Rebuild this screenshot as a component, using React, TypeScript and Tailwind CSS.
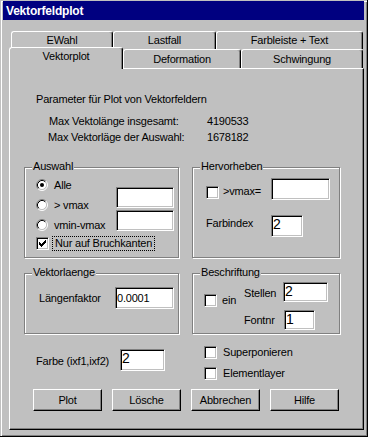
import React from 'react';

const sunken =
  'bg-white border border-t-[#808080] border-l-[#808080] border-r-white border-b-white shadow-[inset_1px_1px_0_#000,inset_-1px_-1px_0_#c0c0c0]';
const raised =
  'border border-t-white border-l-white border-r-black border-b-black shadow-[inset_-1px_-1px_0_#808080]';

function Field({ className, value, big }: { className: string; value?: string; big?: boolean }) {
  return (
    <div
      className={`${sunken} ${className} flex shrink-0 pl-[1px] ${
        big ? 'items-start text-[14px] leading-[16px] tracking-normal' : 'items-center'
      }`}
    >
      {value}
    </div>
  );
}

function CheckBox({ checked }: { checked?: boolean }) {
  return (
    <div className={`${sunken} w-[13px] h-[13px] shrink-0`}>
      {checked && (
        <svg width="9" height="9" viewBox="0 0 9 9" className="block ml-[1px] mt-[1px]" shapeRendering="crispEdges">
          <path
            d="M1 3h1v3h-1zM2 4h1v3h-1zM3 5h1v3h-1zM4 4h1v3h-1zM5 3h1v3h-1zM6 2h1v3h-1zM7 1h1v3h-1z"
            fill="#000"
          />
        </svg>
      )}
    </div>
  );
}

function Radio({ checked }: { checked?: boolean }) {
  return (
    <svg width="12" height="12" viewBox="0 0 12 12" className="shrink-0">
      <circle cx="6" cy="6" r="4.5" fill="#fff" />
      <path d="M2.11 9.89A5.5 5.5 0 0 1 9.89 2.11" fill="none" stroke="#808080" />
      <path d="M9.89 2.11A5.5 5.5 0 0 1 2.11 9.89" fill="none" stroke="#fff" />
      <path d="M2.82 9.18A4.5 4.5 0 0 1 9.18 2.82" fill="none" stroke="#000" />
      <path d="M9.18 2.82A4.5 4.5 0 0 1 2.82 9.18" fill="none" stroke="#c0c0c0" />
      {checked && <circle cx="6" cy="6" r="2" fill="#000" />}
    </svg>
  );
}

function Group({ title, className, children }: { title: string; className: string; children: React.ReactNode }) {
  return (
    <div className={`relative border border-[#808080] shadow-[inset_1px_1px_0_#fff,1px_1px_0_#fff] ${className}`}>
      <span className="absolute -top-[8px] left-[7px] px-[1px] bg-[#c0c0c0]">{title}</span>
      {children}
    </div>
  );
}

const tabBase =
  'flex justify-center bg-[#c0c0c0] border-t border-l border-r border-t-white border-l-white border-r-black rounded-t-[3px] shadow-[inset_-1px_0_0_#808080]';

export default function App() {
  return (
    <div className="w-[368px] h-[437px] flex flex-col pt-[1px] px-[3px] bg-[#c0c0c0] border-r border-b border-black shadow-[inset_1px_1px_0_#c0c0c0,inset_2px_2px_0_#fff,inset_-1px_-1px_0_#808080] font-['Liberation_Sans',Arial,sans-serif] text-[11px] leading-[13px] tracking-[-0.2px] text-black">
      <div className="h-[19px] shrink-0 flex items-center pl-[3px] bg-[#000080] text-white text-[12px] leading-[14px] font-bold">
        Vektorfeldplot
      </div>

      <div className="mt-[11px] ml-[6px] w-[355px]">
        <div className="flex h-[18px] pl-[2px]">
          <div className={`${tabBase} w-[102px] h-[18px] pt-[2px]`}>EWahl</div>
          <div className={`${tabBase} w-[103px] h-[18px] pt-[2px]`}>Lastfall</div>
          <div className={`${tabBase} w-[147px] h-[18px] pt-[2px]`}>Farbleiste + Text</div>
        </div>
        <div className="flex items-start h-[19px]">
          <div className={`${tabBase} relative z-10 w-[114px] h-[22px] -mt-[2px] pt-[2px]`}>Vektorplot</div>
          <div className={`${tabBase} w-[118px] h-[19px] pt-[3px]`}>Deformation</div>
          <div className={`${tabBase} w-[122px] h-[19px] pt-[3px]`}>Schwingung</div>
        </div>

        <div className={`${raised} w-[355px] h-[362px] flex flex-col`}>
          <p className="ml-[26px] mt-[24px]">Parameter für Plot von Vektorfeldern</p>
          <div className="flex mt-[9px]">
            <span className="ml-[39px] w-[158px]">Max Vektolänge insgesamt:</span>
            <span>4190533</span>
          </div>
          <div className="flex mt-[3px]">
            <span className="ml-[38px] w-[159px]">Max Vektorläge der Auswahl:</span>
            <span>1678182</span>
          </div>

          <div className="flex gap-[13px] ml-[14px] mt-[23px]">
            <Group title="Auswahl" className="w-[155px] h-[91px]">
              <div className="pt-[7px] pl-[11px]">
                <div className="flex">
                  <div className="w-[80px] flex flex-col">
                    <div className="h-[20px] flex items-center gap-[6px]">
                      <Radio checked />
                      <span>Alle</span>
                    </div>
                    <div className="h-[20px] flex items-center gap-[6px]">
                      <Radio />
                      <span>&gt; vmax</span>
                    </div>
                    <div className="h-[20px] flex items-center gap-[6px]">
                      <Radio />
                      <span>vmin-vmax</span>
                    </div>
                  </div>
                  <div className="mt-[12px] flex flex-col gap-[2px]">
                    <Field className="w-[58px] h-[21px]" />
                    <Field className="w-[58px] h-[21px]" />
                  </div>
                </div>
                <div className="h-[16px] flex items-center">
                  <CheckBox checked />
                  <span className="ml-[3px] border border-dotted border-black px-[2px]">Nur auf Bruchkanten</span>
                </div>
              </div>
            </Group>

            <Group title="Hervorheben" className="w-[148px] h-[91px]">
              <div className="pt-[10px]">
                <div className="flex items-start">
                  <div className="w-[78px] pl-[13px] flex items-start">
                    <div className="mt-[8px]">
                      <CheckBox />
                    </div>
                    <span className="ml-[4px] mt-[7px]">&gt;vmax=</span>
                  </div>
                  <Field className="w-[59px] h-[22px]" />
                </div>
                <div className="flex items-start mt-[15px]">
                  <span className="w-[78px] pl-[13px] mt-[2px]">Farbindex</span>
                  <Field className="w-[32px] h-[22px]" value="2" big />
                </div>
              </div>
            </Group>
          </div>

          <div className="flex gap-[13px] ml-[14px] mt-[15px]">
            <Group title="Vektorlaenge" className="w-[155px] h-[61px]">
              <div className="pt-[13px] flex items-center">
                <span className="ml-[14px] w-[76px]">Längenfaktor</span>
                <Field className="w-[59px] h-[22px]" value="0.0001" />
              </div>
            </Group>

            <Group title="Beschriftung" className="w-[148px] h-[61px]">
              <div className="flex items-start">
                <div className="w-[51px] pl-[11px] mt-[20px] flex items-center gap-[5px]">
                  <CheckBox />
                  <span>ein</span>
                </div>
                <div className="pt-[8px]">
                  <div className="flex items-start">
                    <span className="w-[39px] mt-[5px]">Stellen</span>
                    <Field className="w-[45px] h-[20px]" value="2" big />
                  </div>
                  <div className="flex items-center mt-[8px]">
                    <span className="w-[40px]">Fontnr</span>
                    <Field className="w-[31px] h-[20px]" value="1" big />
                  </div>
                </div>
              </div>
            </Group>
          </div>

          <div className="flex items-start mt-[12px]">
            <div className="ml-[26px] mt-[3px] flex items-start">
              <span className="w-[84px] mt-[6px]">Farbe (ixf1,ixf2)</span>
              <Field className="w-[45px] h-[22px]" value="2" big />
            </div>
            <div className="ml-[39px] flex flex-col gap-[8px]">
              <div className="h-[13px] flex items-center gap-[6px]">
                <CheckBox />
                <span>Superponieren</span>
              </div>
              <div className="h-[13px] flex items-center gap-[6px]">
                <CheckBox />
                <span>Elementlayer</span>
              </div>
            </div>
          </div>

          <div className="flex gap-[10px] ml-[23px] mt-[9px]">
            {['Plot', 'Lösche', 'Abbrechen', 'Hilfe'].map((b) => (
              <button key={b} className={`${raised} w-[69px] h-[22px] bg-[#c0c0c0] flex items-center justify-center`}>
                {b}
              </button>
            ))}
          </div>
        </div>
      </div>
    </div>
  );
}
